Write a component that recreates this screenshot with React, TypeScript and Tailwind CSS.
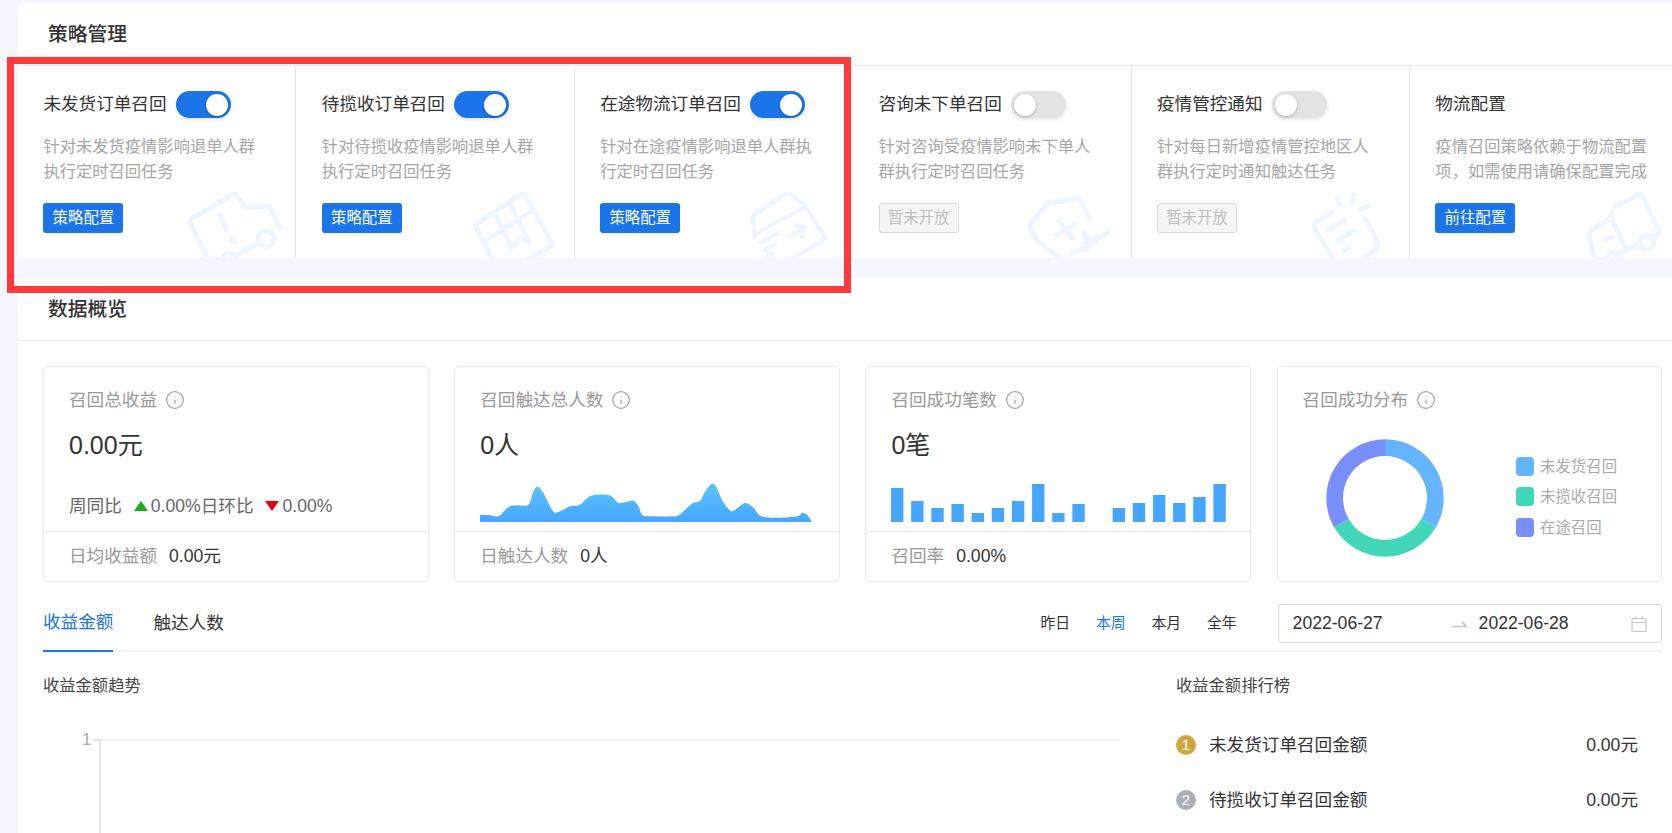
import React from "react";
import { Info } from "lucide-react";

const smooth = (pts: number[][]) => {
  let d = `M${pts[0][0]} ${pts[0][1]}`;
  for (let i = 0; i < pts.length - 1; i++) {
    const p0 = pts[Math.max(i - 1, 0)];
    const p1 = pts[i];
    const p2 = pts[i + 1];
    const p3 = pts[Math.min(i + 2, pts.length - 1)];
    const c1x = p1[0] + (p2[0] - p0[0]) / 6;
    const c1y = p1[1] + (p2[1] - p0[1]) / 6;
    const c2x = p2[0] - (p3[0] - p1[0]) / 6;
    const c2y = p2[1] - (p3[1] - p1[1]) / 6;
    d += ` C${c1x.toFixed(2)} ${c1y.toFixed(2)} ${c2x.toFixed(2)} ${c2y.toFixed(2)} ${p2[0]} ${p2[1]}`;
  }
  return d;
};

const areaPts = [
  [125, 465], [150, 466], [180, 470], [200, 452], [215, 440], [235, 437], [270, 435], [285, 395], [297, 381], [312, 395],
  [330, 430], [347, 458], [365, 455], [395, 440], [425, 435], [450, 412], [475, 405], [510, 406], [525, 415], [540, 430],
  [560, 428], [585, 423], [600, 440], [612, 466], [640, 470], [700, 470], [722, 466], [760, 432], [785, 423], [800, 395],
  [820, 372], [835, 385], [850, 420], [875, 453], [890, 450], [920, 430], [945, 445], [975, 472], [1070, 471], [1090, 460],
  [1105, 465], [1120, 487],
];

const Area = () => (
  <svg viewBox="125 367 995 120" className="block h-[40px] w-[332px]" preserveAspectRatio="none">
    <defs>
      <linearGradient id="area" x1="0" y1="0" x2="0" y2="1">
        <stop offset="0" stopColor="#5cc4ff" />
        <stop offset="1" stopColor="#46a6ff" />
      </linearGradient>
    </defs>
    <path d={`${smooth(areaPts)} L125 487 Z`} fill="url(#area)" />
  </svg>
);

const barHeights = [34, 21, 14, 18, 9, 14, 21, 38, 9, 18, 0, 14, 19, 27, 19, 25, 38];
const Bars = () => (
  <svg viewBox="0 0 335 38" className="block h-[38px] w-[335px]">
    {barHeights.map((h, i) => (
      <rect key={i} x={i * 20.15} y={38 - h} width={12.4} height={h} fill="#46a6ff" />
    ))}
  </svg>
);

const arc = (a0: number, a1: number) => {
  const c = 59;
  const R = 58.7;
  const r = 42;
  const p = (rad: number, a: number) => {
    const t = ((a - 90) * Math.PI) / 180;
    return `${(c + rad * Math.cos(t)).toFixed(2)} ${(c + rad * Math.sin(t)).toFixed(2)}`;
  };
  return `M${p(R, a0)} A${R} ${R} 0 0 1 ${p(R, a1)} L${p(r, a1)} A${r} ${r} 0 0 0 ${p(r, a0)} Z`;
};

const Donut = () => (
  <svg viewBox="0 0 118 118" className="block h-[118px] w-[118px] shrink-0">
    <path d={arc(0, 120)} fill="#65b4ff" />
    <path d={arc(120, 240)} fill="#41d7b8" />
    <path d={arc(240, 360)} fill="#7a8fff" />
  </svg>
);

const deco = { fill: "none", stroke: "#eef5fe", strokeWidth: 5, strokeLinecap: "round", strokeLinejoin: "round" } as const;

const Icon1 = () => (
  <svg viewBox="0 0 100 66" className="absolute left-[170px] top-[126px] h-[66px] w-[100px]" {...deco}>
    <path d="M22 70 L3 33 Q1 28 5 26 L44 3 Q48 1 50 5 L58 16 L78 14 Q82 14 83 17 L92 36" />
    <circle cx="78" cy="47" r="8" />
    <path d="M71 51 L46 64" />
    <circle cx="40" cy="66" r="5" />
    <path d="M32 23 L38 38" />
    <circle cx="45" cy="48" r="1.5" />
  </svg>
);
const Icon2 = () => (
  <svg viewBox="0 0 100 66" className="absolute left-[176px] top-[126px] h-[66px] w-[100px]" {...deco}>
    <path d="M3 33 L48 3 Q52 1 54 5 L79 49 Q81 53 77 55 L38 78 L22 70 Z" />
    <path d="M11 50 L62 18" />
    <path d="M24 25 L40 56 L47 46 L57 50 L39 14" />
  </svg>
);
const Icon3 = () => (
  <svg viewBox="0 0 110 75" className="absolute left-[165px] top-[119px] h-[75px] w-[110px]" {...deco} strokeWidth={4.5}>
    <path d="M15 52 L13 35 Q12 30 16 28 L45 10 Q48 8 52 10 L63 18 L84 50 Q86 54 82 56 L50 75" />
    <path d="M17 48 L65 22" />
    <path d="M50 51 L65 43 M55 40 L65 42 L62 52" />
    <path d="M20 58 L38 48 M25 65 L35 60 M28 72 L33 69" />
  </svg>
);
const Icon4 = () => (
  <svg viewBox="0 0 110 75" className="absolute left-[167px] top-[119px] h-[75px] w-[110px]" {...deco}>
    <path d="M42 74 L18 57 L9 40 L28 18 Q30 17 32 17 Q45 17 58 12 L70 34" />
    <path d="M39 36 L52 53 M37 50 L55 39" />
    <path d="M52 68 L68 63 L64 48 L72 57 L88 48" />
  </svg>
);
const Icon5 = () => (
  <svg viewBox="0 0 110 75" className="absolute left-[168px] top-[119px] h-[75px] w-[110px]" {...deco}>
    <path d="M33 27 L16 37 Q13 40 15 44 L33 74" />
    <path d="M65 33 L78 58 Q79 62 75 65 L62 74" />
    <path d="M28 45 L44 36 M37 56 L54 46 M43 66 L50 62" />
    <path d="M37 13 L40 20 M54 10 L52 18 M60 25 L68 21" />
  </svg>
);
const Icon6 = () => (
  <svg viewBox="0 0 102 75" className="absolute left-[160px] top-[119px] h-[75px] w-[102px]" {...deco}>
    <path d="M45 22 L67 10 Q71 8 73 12 L90 48 L83 52" />
    <path d="M42 27 Q40 30 41 33 L57 65" />
    <path d="M38 35 L25 43 Q18 47 19 52 L25 75" />
    <path d="M35 55 L42 52" />
    <path d="M50 68 L70 58" />
    <circle cx="77" cy="57" r="7" />
    <circle cx="43" cy="73" r="6" />
  </svg>
);

const Cell = ({
  title,
  desc,
  on,
  btn,
  disabled,
  icon,
  last,
}: {
  title: string;
  desc: string;
  on?: boolean;
  btn: string;
  disabled?: boolean;
  icon: React.ReactNode;
  last?: boolean;
}) => (
  <div className={`relative h-full w-[278.4px] shrink-0 overflow-hidden px-[25.4px] pt-[25px] ${last ? "" : "border-r border-[#e6e6e6]"}`}>
    {icon}
    <div className="relative flex h-[27px] items-center">
      <span className="text-[17.6px] leading-[27px] text-[#333]">{title}</span>
      {on !== undefined && (
        <span
          className={`ml-[9px] flex h-[27px] w-[55px] items-center rounded-full px-[3px] shadow-[0_2px_4px_rgba(0,0,0,0.1)] ${
            on ? "justify-end bg-[#1b74e8]" : "justify-start bg-[#e3e3e3]"
          }`}
        >
          <span className="h-[22px] w-[22px] rounded-full bg-white shadow-[0_1px_3px_rgba(0,0,0,0.25)]" />
        </span>
      )}
    </div>
    <p className="relative mt-[15.5px] w-[222px] text-[16.3px] leading-[25px] text-[#a6a6a6]">{desc}</p>
    {disabled ? (
      <div className="relative mt-[19.5px] flex h-[30px] w-[80px] items-center justify-center rounded-[3px] border border-[#d9d9d9] bg-[#f5f5f5] text-[15.4px] text-[#bfbfbf]">
        {btn}
      </div>
    ) : (
      <div className="relative mt-[19.5px] flex h-[30px] w-[80px] items-center justify-center rounded-[3px] bg-[#1b74e8] text-[15.4px] text-white shadow-[0_2px_2px_rgba(0,0,0,0.06)]">
        {btn}
      </div>
    )}
  </div>
);

const StatCard = ({ title, children }: { title: string; children: React.ReactNode }) => (
  <div className="flex h-[216px] w-[385.6px] shrink-0 flex-col rounded-[5px] border border-[#e8e8e8]">
    <div className="mt-[21px] flex h-[24px] items-center px-[25px]">
      <span className="text-[17.6px] leading-[24px] text-[#999]">{title}</span>
      <Info size={20} strokeWidth={1.5} className="ml-[8px] text-[#a3a3a3]" />
    </div>
    {children}
  </div>
);

const Body = ({ value, children }: { value: string; children?: React.ReactNode }) => (
  <div className="flex h-[119px] flex-col px-[25px]">
    <div className="mt-[17px] h-[32px] text-[25px] leading-[32px] text-[#333]">{value}</div>
    {children}
  </div>
);

const Foot = ({ label, value }: { label: string; value: string }) => (
  <div className="flex h-[50px] items-center border-t border-[#e8e8e8] px-[25px] text-[17.6px]">
    <span className="text-[#999]">{label}</span>
    <span className="ml-[12px] text-[#333]">{value}</span>
  </div>
);

const Legend = ({ color, text }: { color: string; text: string }) => (
  <div className="flex h-[19px] items-center gap-[6px]">
    <span className={`h-[19px] w-[18px] rounded-[4px] ${color}`} />
    <span className="text-[15.4px] leading-[19px] text-[#aaa]">{text}</span>
  </div>
);

const Rank = ({ n, color, text }: { n: number; color: string; text: string }) => (
  <div className="flex h-[55px] items-center">
    <span className={`flex h-[20px] w-[20px] items-center justify-center rounded-full text-[15px] text-white ${color}`}>{n}</span>
    <span className="ml-[13px] text-[17.6px] text-[#333]">{text}</span>
    <span className="ml-auto text-[17.6px] text-[#333]">0.00元</span>
  </div>
);

export default function App() {
  return (
    <div className="relative h-[833px] w-[1672px] overflow-hidden bg-[#f4f6fd] pl-[18px] pt-[3px] font-['Liberation_Sans','Noto_Sans_CJK_SC',sans-serif]">
      <section className="h-[255px] overflow-hidden rounded-tl-[7px] bg-white">
        <div className="flex h-[63px] items-center border-b border-[#e8e8e8] pl-[30px]">
          <h2 className="text-[19.8px] font-medium leading-[28px] text-[#333]">策略管理</h2>
        </div>
        <div className="flex h-[192px] w-[1680px]">
          <Cell title="未发货订单召回" desc="针对未发货疫情影响退单人群执行定时召回任务" on btn="策略配置" icon={<Icon1 />} />
          <Cell title="待揽收订单召回" desc="针对待揽收疫情影响退单人群执行定时召回任务" on btn="策略配置" icon={<Icon2 />} />
          <Cell title="在途物流订单召回" desc="针对在途疫情影响退单人群执行定时召回任务" on btn="策略配置" icon={<Icon3 />} />
          <Cell title="咨询未下单召回" desc="针对咨询受疫情影响未下单人群执行定时召回任务" on={false} btn="暂未开放" disabled icon={<Icon4 />} />
          <Cell title="疫情管控通知" desc="针对每日新增疫情管控地区人群执行定时通知触达任务" on={false} btn="暂未开放" disabled icon={<Icon5 />} />
          <Cell title="物流配置" desc="疫情召回策略依赖于物流配置项，如需使用请确保配置完成" btn="前往配置" icon={<Icon6 />} last />
        </div>
      </section>

      <section className="mt-[20px] h-[560px] rounded-tl-[7px] bg-white">
        <div className="flex h-[63px] items-center border-b border-[#e8e8e8] pl-[30px]">
          <h2 className="text-[19.8px] font-medium leading-[28px] text-[#333]">数据概览</h2>
        </div>
        <div className="pl-[25px] pr-[10px]">
          <div className="mt-[25px] flex gap-[25.6px]">
            <StatCard title="召回总收益">
              <Body value="0.00元">
                <div className="mb-[13px] mt-auto flex h-[24px] items-center text-[17.6px] text-[#666]">
                  <span>周同比</span>
                  <span className="ml-[12px] h-0 w-0 border-x-[7.5px] border-b-[10px] border-x-transparent border-b-[#1aad19]" />
                  <span className="ml-[3px]">0.00%</span>
                  <span>日环比</span>
                  <span className="ml-[12px] h-0 w-0 border-x-[7.5px] border-t-[10px] border-x-transparent border-t-[#e60012]" />
                  <span className="ml-[3px]">0.00%</span>
                </div>
              </Body>
              <Foot label="日均收益额" value="0.00元" />
            </StatCard>
            <StatCard title="召回触达总人数">
              <Body value="0人">
                <div className="mb-[9px] mt-auto">
                  <Area />
                </div>
              </Body>
              <Foot label="日触达人数" value="0人" />
            </StatCard>
            <StatCard title="召回成功笔数">
              <Body value="0笔">
                <div className="mb-[9px] mt-auto">
                  <Bars />
                </div>
              </Body>
              <Foot label="召回率" value="0.00%" />
            </StatCard>
            <StatCard title="召回成功分布">
              <div className="mt-[27px] flex items-center pl-[48.5px]">
                <Donut />
                <div className="-mt-[3px] ml-[72px] flex flex-col gap-[11.5px]">
                  <Legend color="bg-[#65b4ff]" text="未发货召回" />
                  <Legend color="bg-[#41d7b8]" text="未揽收召回" />
                  <Legend color="bg-[#7a8fff]" text="在途召回" />
                </div>
              </div>
            </StatCard>
          </div>

          <div className="mt-[22px] flex h-[48px] items-start border-b-2 border-[#eff1f4]">
            <div className="flex h-[48px] w-[70.4px] items-center justify-start border-b-2 border-[#1b74e8] pb-[10px] text-[17.6px] text-[#1b74e8]">
              收益金额
            </div>
            <div className="ml-[40px] flex h-[38px] items-center text-[17.6px] text-[#333]">触达人数</div>
            <div className="ml-auto flex h-[39px] items-center gap-[25.9px] text-[14.8px] text-[#333]">
              <span>昨日</span>
              <span className="text-[#1b74e8]">本周</span>
              <span>本月</span>
              <span>全年</span>
            </div>
            <div className="ml-[41px] flex h-[39px] w-[384.4px] items-center rounded-[3px] border border-[#d9d9d9] pl-[14px] pr-[14px] text-[17.6px] text-[#333]">
              <span className="w-[159px]">2022-06-27</span>
              <svg viewBox="0 0 15 8" className="h-[8px] w-[15px] text-[#c4c4c4]" fill="none" stroke="currentColor" strokeWidth="1.5">
                <path d="M0 6.5 H14 L10 1.5" />
              </svg>
              <span className="ml-[12px]">2022-06-28</span>
              <svg viewBox="0 0 16 16" className="ml-auto h-[16px] w-[16px] text-[#c9c9c9]" fill="none" stroke="currentColor" strokeWidth="1.2">
                <rect x="1" y="2.5" width="14" height="13" rx="1" />
                <path d="M1 6.5 H15 M4.5 0.5 V3.5 M11.5 0.5 V3.5" />
              </svg>
            </div>
          </div>

          <div className="flex">
            <div className="w-[1133px] shrink-0">
              <div className="mt-[21px] h-[24px] text-[16.3px] leading-[24px] text-[#444]">收益金额趋势</div>
              <svg viewBox="0 0 1077 140" className="block h-[140px] w-[1077px]">
                <text x="39" y="48" fontSize="16.5" fill="#aaa" fontFamily="Liberation Sans, sans-serif">1</text>
                <path d="M50 43 H57" stroke="#e5e5e5" strokeWidth="2" />
                <path d="M57 43 H1077" stroke="#f0f3f7" strokeWidth="2" />
                <path d="M57 42 V140" stroke="#e5e5e5" strokeWidth="2" />
              </svg>
            </div>
            <div className="w-[462px] shrink-0">
              <div className="mt-[21px] h-[24px] text-[16.3px] leading-[24px] text-[#444]">收益金额排行榜</div>
              <div className="mt-[20.5px]">
                <Rank n={1} color="bg-[#d0a640]" text="未发货订单召回金额" />
                <Rank n={2} color="bg-[#acafb7]" text="待揽收订单召回金额" />
              </div>
            </div>
          </div>
        </div>
      </section>

      <div className="absolute left-[7px] top-[57px] h-[236px] w-[844px] border-[7px] border-[#fd3a3a]" />
    </div>
  );
}
